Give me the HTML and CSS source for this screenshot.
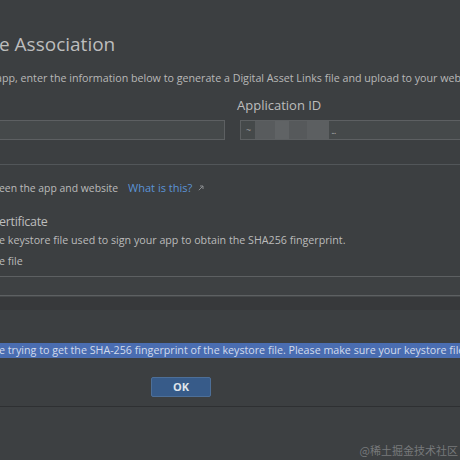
FILE: index.html
```html
<!DOCTYPE html>
<html lang="en">
<head>
<meta charset="utf-8">
<title>Declare Website Association</title>
<link rel="stylesheet" href="styles.css">
</head>
<body>
<div class="page">
  <section class="main">
    <h1 class="title">e Association</h1>
    <p class="desc">app, enter the information below to generate a Digital Asset Links file and upload to your website.</p>
    <div class="fields">
      <div class="col col-left">
        <div class="label">&nbsp;</div>
        <div class="input"></div>
      </div>
      <div class="col col-right">
        <div class="label">Application ID</div>
        <div class="input blurred">
          <span class="blur-dot">~</span>
          <span class="blur b1"></span>
          <span class="blur b2"></span>
          <span class="blur b3"></span>
          <span class="blur b4"></span>
          <span class="blur-dots">...</span>
        </div>
      </div>
    </div>
    <hr class="sep">
    <div class="check-row">
      <span class="check-text">een the app and website</span>
      <a class="link">What is this?</a>
      <svg class="ext" width="6" height="6" viewBox="0 0 6 6"><path d="M0.8 5.2 L5 1 M2 1 H5 V4" fill="none" stroke="#8a8d90" stroke-width="1"/></svg>
    </div>
    <h2 class="sub">ertificate</h2>
    <p class="hint">e keystore file used to sign your app to obtain the SHA256 fingerprint.</p>
    <p class="hint hint-file">e file</p>
    <div class="path-field"></div>
    <div class="strip"></div>
  </section>
  <section class="dialog">
    <p class="error">e trying to get the SHA-256 fingerprint of the keystore file. Please make sure your keystore file is valid.</p>
    <div class="actions">
      <button class="ok">OK</button>
    </div>
  </section>
  <footer class="footer">
    <span class="mark">@稀土掘金技术社区</span>
  </footer>
</div>
</body>
</html>
```
FILE: styles.css
```css
html, body {
  margin: 0;
  padding: 0;
}
body {
  background: #3c3f41;
  color: #bbbbbb;
  font-family: "Open Sans", "Noto Sans", "Noto Sans CJK SC", sans-serif;
  width: 460px;
  height: 460px;
  overflow: hidden;
}
.page {
  width: 460px;
  height: 460px;
  display: flex;
  flex-direction: column;
  overflow: hidden;
}
.main {
  display: flex;
  flex-direction: column;
  height: 310px;
}
.title {
  margin: 32px 0 0 -1px;
  font-size: 19px;
  line-height: 24px;
  font-weight: 400;
  color: #bdbdbd;
  white-space: nowrap;
}
.desc {
  margin: 14px 0 0 0;
  font-size: 10.7px;
  line-height: 16px;
  text-indent: -4px;
  white-space: nowrap;
  overflow: hidden;
  color: #b8b8b8;
}
.fields {
  margin-top: 10px;
  display: grid;
  grid-template-columns: 225px 1fr;
  column-gap: 15px;
}
.col {
  display: flex;
  flex-direction: column;
  gap: 6px;
}
.label {
  font-size: 13px;
  line-height: 18px;
  margin-left: -3px;
  color: #bdbdbd;
  white-space: nowrap;
}
.input {
  height: 18px;
  border: 1px solid #5d6062;
  background: #45494a;
}
.col-left .input {
  border-left: none;
}
.col-right .input {
  border-right: none;
}
.blurred {
  display: flex;
  align-items: center;
  overflow: hidden;
}
.blur-dot {
  font-size: 9px;
  color: #9a9a9a;
  margin-left: 5px;
  line-height: 10px;
}
.blur {
  display: block;
  height: 18px;
}
.b1 { width: 20px; background: #585b5d; margin-left: 4px; }
.b2 { width: 14px; background: #606365; }
.b3 { width: 18px; background: #56595b; }
.b4 { width: 22px; background: #5c5f61; }
.blur-dots {
  font-size: 9px;
  color: #a8a8a8;
  margin-left: 2px;
  letter-spacing: -1px;
}
.sep {
  margin: 24px 0 0 0;
  border: none;
  height: 1px;
  background: #525659;
}
.check-row {
  margin-top: 15px;
  display: flex;
  align-items: center;
  font-size: 11px;
  line-height: 16px;
  white-space: nowrap;
}
.check-text {
  margin-left: -1px;
  font-size: 10.4px;
}
.link {
  margin-left: 10px;
  color: #5b93d6;
}
.ext {
  margin-left: 6px;
}
.sub {
  margin: 17px 0 0 -1px;
  font-size: 12.5px;
  letter-spacing: -0.3px;
  line-height: 18px;
  font-weight: 400;
  color: #bdbdbd;
  white-space: nowrap;
}
.hint {
  margin: 1px 0 0 -1px;
  font-size: 10.7px;
  line-height: 16px;
  white-space: nowrap;
}
.hint-file {
  margin-top: 5px;
}
.path-field {
  margin-top: 7px;
  height: 18px;
  border-top: 1px solid #5d6062;
  border-bottom: 1px solid #5d6062;
  background: #3e4143;
}
.strip {
  flex: 1;
  background: #37393b;
  border-top: 1px solid #46494b;
}
.dialog {
  height: 96px;
  background: #3c3f41;
  border-bottom: 1px solid #2e3032;
  display: flex;
  flex-direction: column;
}
.error {
  margin: 33px 0 0 0;
  font-size: 10.7px;
  line-height: 15px;
  background: #4a6db1;
  color: #d2dbec;
  white-space: nowrap;
  overflow: hidden;
  text-indent: -1px;
}
.actions {
  margin-top: 19px;
  padding-left: 151px;
  display: flex;
}
.ok {
  width: 60px;
  height: 20px;
  box-sizing: border-box;
  background: #375b89;
  border: 1px solid #4d6f98;
  border-radius: 2px;
  color: #dfe4ea;
  font-family: "Open Sans", sans-serif;
  font-weight: 700;
  font-size: 11px;
  line-height: 16px;
  padding: 0;
}
.footer {
  flex: 1;
  display: flex;
  justify-content: flex-end;
  align-items: flex-end;
  padding: 0 2px 3px 0;
  background: #3d4042;
}
.mark {
  font-size: 11px;
  line-height: 14px;
  color: #77797b;
  font-family: "Noto Sans CJK SC", sans-serif;
}
```
